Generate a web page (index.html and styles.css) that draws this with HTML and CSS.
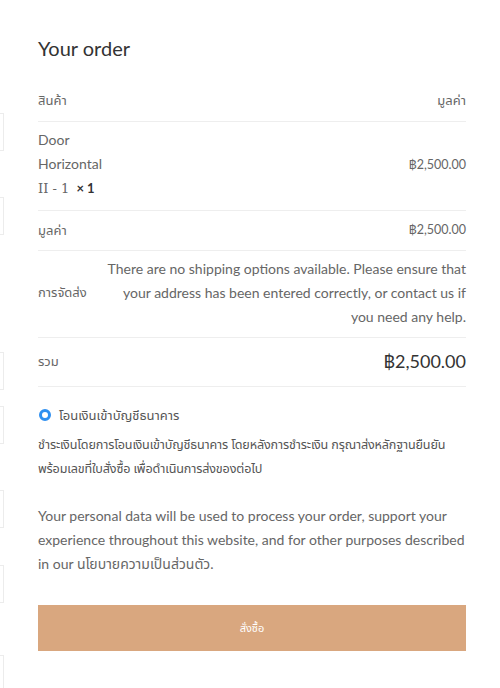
FILE: index.html
```html
<!DOCTYPE html>
<html lang="th">
<head>
<meta charset="utf-8">
<link rel="stylesheet" href="styles.css">
</head>
<body>
<div class="page">
  <div class="edge">
    <div class="edge-box b1"></div>
    <div class="edge-box b2"></div>
    <div class="edge-box b3"></div>
    <div class="edge-box b4"></div>
    <div class="edge-box b5"></div>
    <div class="edge-box b6"></div>
    <div class="edge-box b7"></div>
  </div>
  <main class="order">
    <h3 class="title">Your order</h3>
    <div class="row head">
      <span>สินค้า</span>
      <span>มูลค่า</span>
    </div>
    <div class="row item">
      <div class="name">Door<br>Horizontal<br><span class="serif">II - 1</span>&nbsp; <strong class="qty">× 1</strong></div>
      <span class="amount">฿2,500.00</span>
    </div>
    <div class="row sub">
      <span>มูลค่า</span>
      <span class="amount">฿2,500.00</span>
    </div>
    <div class="row ship">
      <span class="label">การจัดส่ง</span>
      <p class="ship-note">There are no shipping options available. Please ensure that your address has been entered correctly, or contact us if you need any help.</p>
    </div>
    <div class="row total">
      <span>รวม</span>
      <span class="total-amount">฿2,500.00</span>
    </div>
    <div class="payment">
      <label class="method"><span class="radio"></span>โอนเงินเข้าบัญชีธนาคาร</label>
      <p class="method-desc">ชำระเงินโดยการโอนเงินเข้าบัญชีธนาคาร โดยหลังการชำระเงิน กรุณาส่งหลักฐานยืนยัน พร้อมเลขที่ใบสั่งซื้อ เพื่อดำเนินการส่งของต่อไป</p>
    </div>
    <p class="privacy">Your personal data will be used to process your order, support your experience throughout this website, and for other purposes described in our นโยบายความเป็นส่วนตัว.</p>
    <button class="submit">สั่งซื้อ</button>
  </main>
</div>
</body>
</html>
```
FILE: styles.css
```css
* { box-sizing: border-box; }
html, body { margin: 0; padding: 0; background: #fff; }
body {
  font-family: Lato, "Noto Sans Thai", "Noto Sans", sans-serif;
  color: #666;
  font-size: 13px;
}
.page {
  display: flex;
  width: 500px;
  height: 688px;
  overflow: hidden;
}
.edge {
  width: 38px;
  flex: none;
  display: flex;
  flex-direction: column;
}
.edge-box {
  width: 4px;
  height: 38px;
  border: 1px solid #ececec;
  border-left: none;
  flex: none;
}
.b1 { margin-top: 113px; }
.b2 { margin-top: 46px; }
.b3 { margin-top: 117px; }
.b4 { margin-top: 16px; }
.b5 { margin-top: 46px; }
.b6 { margin-top: 37px; }
.b7 { margin-top: 52px; }
.order {
  width: 428px;
  flex: none;
  padding-top: 34px;
}
.title {
  margin: 0 0 18px;
  font-size: 20px;
  font-weight: 400;
  color: #333;
  line-height: 28px;
}
.row {
  display: flex;
  justify-content: space-between;
  align-items: center;
  border-bottom: 1px solid #eee;
}
.head { padding: 8px 0 9px; line-height: 24px; }
.item { padding: 6px 0 9px; line-height: 24px; font-size: 14px; }
.item .serif { font-family: "DejaVu Serif", serif; font-size: 13px; }
.qty { color: #333; font-weight: 700; font-size: 13px; }
.amount { font-size: 12.5px; }
.sub { padding: 7px 0 8px; line-height: 24px; }
.ship { padding: 6px 0 8px; }
.ship .label { flex: none; }
.ship-note {
  margin: 0;
  width: 360px;
  text-align: right;
  font-size: 14px;
  line-height: 24px;
}
.total { padding: 11px 0 13px; line-height: 24px; }
.total-amount { font-size: 18px; color: #333; }
.payment { padding-top: 16px; }
.method {
  display: flex;
  align-items: center;
  gap: 8px;
  line-height: 24px;
  font-size: 13px;
  color: #555;
  padding-left: 1px;
}
.radio {
  width: 12px;
  height: 12px;
  border-radius: 50%;
  border: 3.5px solid #2e8ff0;
  background: #fff;
  flex: none;
}
.method-desc {
  margin: 6px 0 0;
  line-height: 24px;
  font-size: 12.6px;
  letter-spacing: -0.15px;
  color: #555;
}
.privacy {
  margin: 23px 0 0;
  font-size: 14px;
  line-height: 24px;
  color: #666;
}
.submit {
  display: block;
  width: 100%;
  height: 46px;
  margin-top: 29px;
  border: none;
  background: #d9a77f;
  color: #fff;
  font-family: inherit;
  font-size: 11px;
}
```
